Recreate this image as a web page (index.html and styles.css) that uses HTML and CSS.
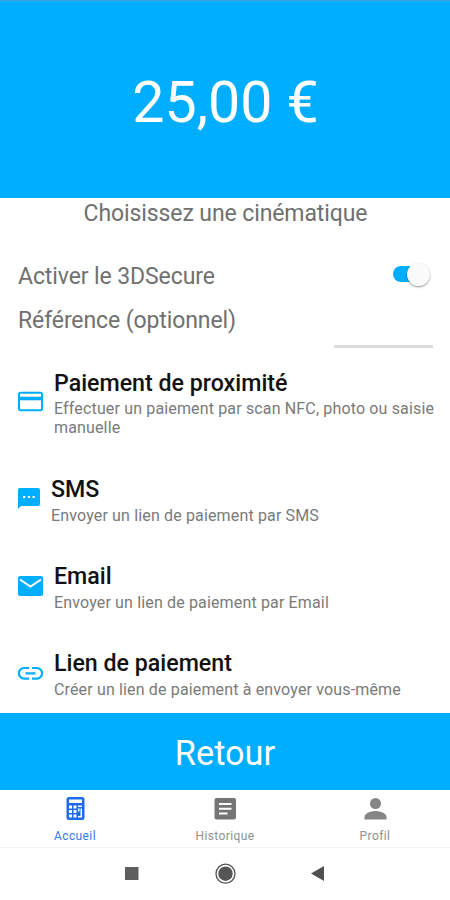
FILE: index.html
```
<!DOCTYPE html>
<html lang="fr">
<head>
<meta charset="utf-8">
<title>Paiement</title>
<link rel="stylesheet" href="styles.css">
</head>
<body>

<header class="amount"><span>25,00 €</span></header>

<main class="content">
	<p class="subtitle"><span>Choisissez une cinématique</span></p>
	<div class="row secure">
		<span>Activer le 3DSecure</span>
		<span class="switch"></span>
	</div>
	<div class="row reference">
		<span>Référence (optionnel)</span>
		<span class="field"></span>
	</div>

	<div class="choice first">
		<svg class="icon" width="26" height="26" viewBox="0 0 26 26"><rect x="1" y="3.700" width="23" height="17.600" rx="1.500" fill="none" stroke="#00aeff" stroke-width="2"/><path d="M1 7.700h23v3.600H1z" fill="#00aeff"/></svg>
		<div>
			<h2><span>Paiement de proximité</span></h2>
			<p>Effectuer un paiement par scan NFC, photo ou saisie manuelle</p>
		</div>
	</div>
	<div class="choice sms">
		<svg class="icon" width="22" height="26" viewBox="0 0 22 26"><path d="M2 2h18q2 0 2 2v14q0 2-2 2H3L0 23V4q0-2 2-2z" fill="#00aeff"/><path d="M5 10h2.300v2H5zm4.800 0h2.300v2H9.800zm4.700 0h2.300v2h-2.300z" fill="#fff"/></svg>
		<div>
			<h2><span>SMS</span></h2>
			<p>Envoyer un lien de paiement par SMS</p>
		</div>
	</div>
	<div class="choice">
		<svg class="icon" width="26" height="26" viewBox="0 0 26 26"><rect x="0" y="3" width="25" height="20" rx="2" fill="#00aeff"/><path d="M2 6.500L12.500 13.500l10.500-7" fill="none" stroke="#fff" stroke-width="2"/></svg>
		<div>
			<h2><span>Email</span></h2>
			<p>Envoyer un lien de paiement par Email</p>
		</div>
	</div>
	<div class="choice">
		<svg class="icon" width="26" height="26" viewBox="0 0 26 26"><path d="M11 8H6.200a5 5 0 0 0 0 10.600H11M14 8h4.800a5 5 0 0 1 0 10.600H14M7.500 13.300h10" fill="none" stroke="#00aeff" stroke-width="2.200"/></svg>
		<div>
			<h2><span>Lien de paiement</span></h2>
			<p>Créer un lien de paiement à envoyer vous-même</p>
		</div>
	</div>
</main>

<div class="back"><span>Retour</span></div>

<nav class="tabs">
	<a class="tab active">
		<svg width="24" height="24" viewBox="0 0 24 24"><rect x="3.500" y="1" width="18" height="23" rx="2.500" fill="#1f6bee"/><path d="M6 3.500h13V7H6zM6 9.500h3v3H6zm4.500 0h3v3h-3zM15 9.500h4v1.500h-4zM6 14h3v3H6zm4.500 0h3v3h-3zM6 18.500h3v3H6zm4.500 0h3v3h-3zM15 12.500h1.500v3H15zm2.500 0H19v9h-4V20h2.500z" fill="#fff"/></svg>
		<span>Accueil</span>
	</a>
	<a class="tab">
		<svg width="24" height="24" viewBox="0 0 24 24"><rect x="1.500" y="2" width="21.500" height="21.500" rx="2" fill="#757575"/><path d="M6 7h12.500v2H6zM6 11.700h12.500v2H6zM6 16.500h8.500v2H6z" fill="#fff"/></svg>
		<span>Historique</span>
	</a>
	<a class="tab">
		<svg width="24" height="24" viewBox="0 0 24 24"><circle cx="12.500" cy="7.500" r="5.500" fill="#858585"/><path d="M1.500 23.500V21c0-4 7-6 11-6s11 2 11 6v2.500z" fill="#858585"/></svg>
		<span>Profil</span>
	</a>
</nav>

<footer class="system">
	<svg width="24" height="24" viewBox="0 0 24 24"><path d="M6 5h13.500v13H6z" fill="#5e5e5e"/></svg>
	<svg width="24" height="24" viewBox="0 0 24 24"><circle cx="12.500" cy="11.700" r="9.500" fill="#fff" stroke="#555" stroke-width="1.300"/><circle cx="12.500" cy="11.700" r="7.200" fill="#555"/></svg>
	<svg width="24" height="24" viewBox="0 0 24 24"><path d="M4 11.500L17 4v15z" fill="#505050"/></svg>
</footer>

</body>
</html>
```
FILE: styles.css
```
* {
	box-sizing: border-box;
}
body {
	margin: 0;
	height: 900px;
	display: flex;
	flex-direction: column;
	background: #fff;
	font-family: Roboto, sans-serif;
	color: #707070;
	overflow: hidden;
}
h2, p {
	margin: 0;
}
svg {
	display: block;
}
.amount {
	height: 198px;
	padding-top: 6px;
	border-top: 1px solid #3f9fd2;
	background: #00aeff;
	color: #fff;
	font-size: 57.3px;
	display: flex;
	align-items: center;
	justify-content: center;
}
.amount span {
	margin-left: 1px;
}
.content {
	height: 515px;
	padding: 0 15px 0 18px;
}
.subtitle {
	height: 30px;
	padding-right: 2px;
	line-height: 31px;
	font-size: 23px;
	letter-spacing: -0.1px;
	text-align: center;
}
.row {
	display: flex;
	justify-content: space-between;
	padding-right: 2px;
	font-size: 23px;
	letter-spacing: -0.1px;
	line-height: 31px;
}
.secure {
	margin-top: 33px;
}
.reference {
	margin-top: 13px;
}
.switch {
	position: relative;
	width: 34px;
	height: 16px;
	margin: 5px 6px 0 0;
	border-radius: 8px;
	background: #00aeff;
}
.switch::after {
	content: "";
	position: absolute;
	top: -3px;
	right: -3px;
	width: 23px;
	height: 23px;
	border-radius: 50%;
	background: #fafafa;
	box-shadow: 0 1px 2px rgba(0,0,0,0.4);
}
.field {
	width: 99px;
	height: 43px;
	border-bottom: 3px solid #dcdcdc;
}
.choice {
	display: flex;
	align-items: center;
	gap: 10px;
	height: 47px;
	margin-top: 40px;
}
.choice.first {
	height: 66px;
	margin-top: 21px;
}
.choice.sms {
	gap: 11px;
}
.icon {
	flex: none;
}
.choice h2 {
	font-size: 23.2px;
	line-height: 27px;
	font-weight: 500;
	color: #111;
}
.choice p {
	font-size: 16px;
	line-height: 19px;
	letter-spacing: 0.15px;
	padding-top: 3px;
	margin-bottom: -3px;
	color: #7a7a7a;
}
.choice.first p {
	padding-top: 2px;
	margin-bottom: -2px;
}
.back {
	height: 77px;
	padding-top: 3px;
	background: #00aeff;
	color: #fff;
	font-size: 34.3px;
	display: flex;
	align-items: center;
	justify-content: center;
}
.tabs {
	height: 58px;
	display: flex;
	border-bottom: 1px solid #f4f4f4;
}
.tab {
	flex: 1;
	padding-top: 6px;
	display: flex;
	flex-direction: column;
	align-items: center;
	font-size: 12px;
	line-height: 14px;
	letter-spacing: 0.4px;
	gap: 9px;
	color: #909090;
}
.tab.active {
	color: #3478ee;
}
.system {
	height: 52px;
	display: flex;
	align-items: center;
	justify-content: center;
	gap: 70px;
}
```
